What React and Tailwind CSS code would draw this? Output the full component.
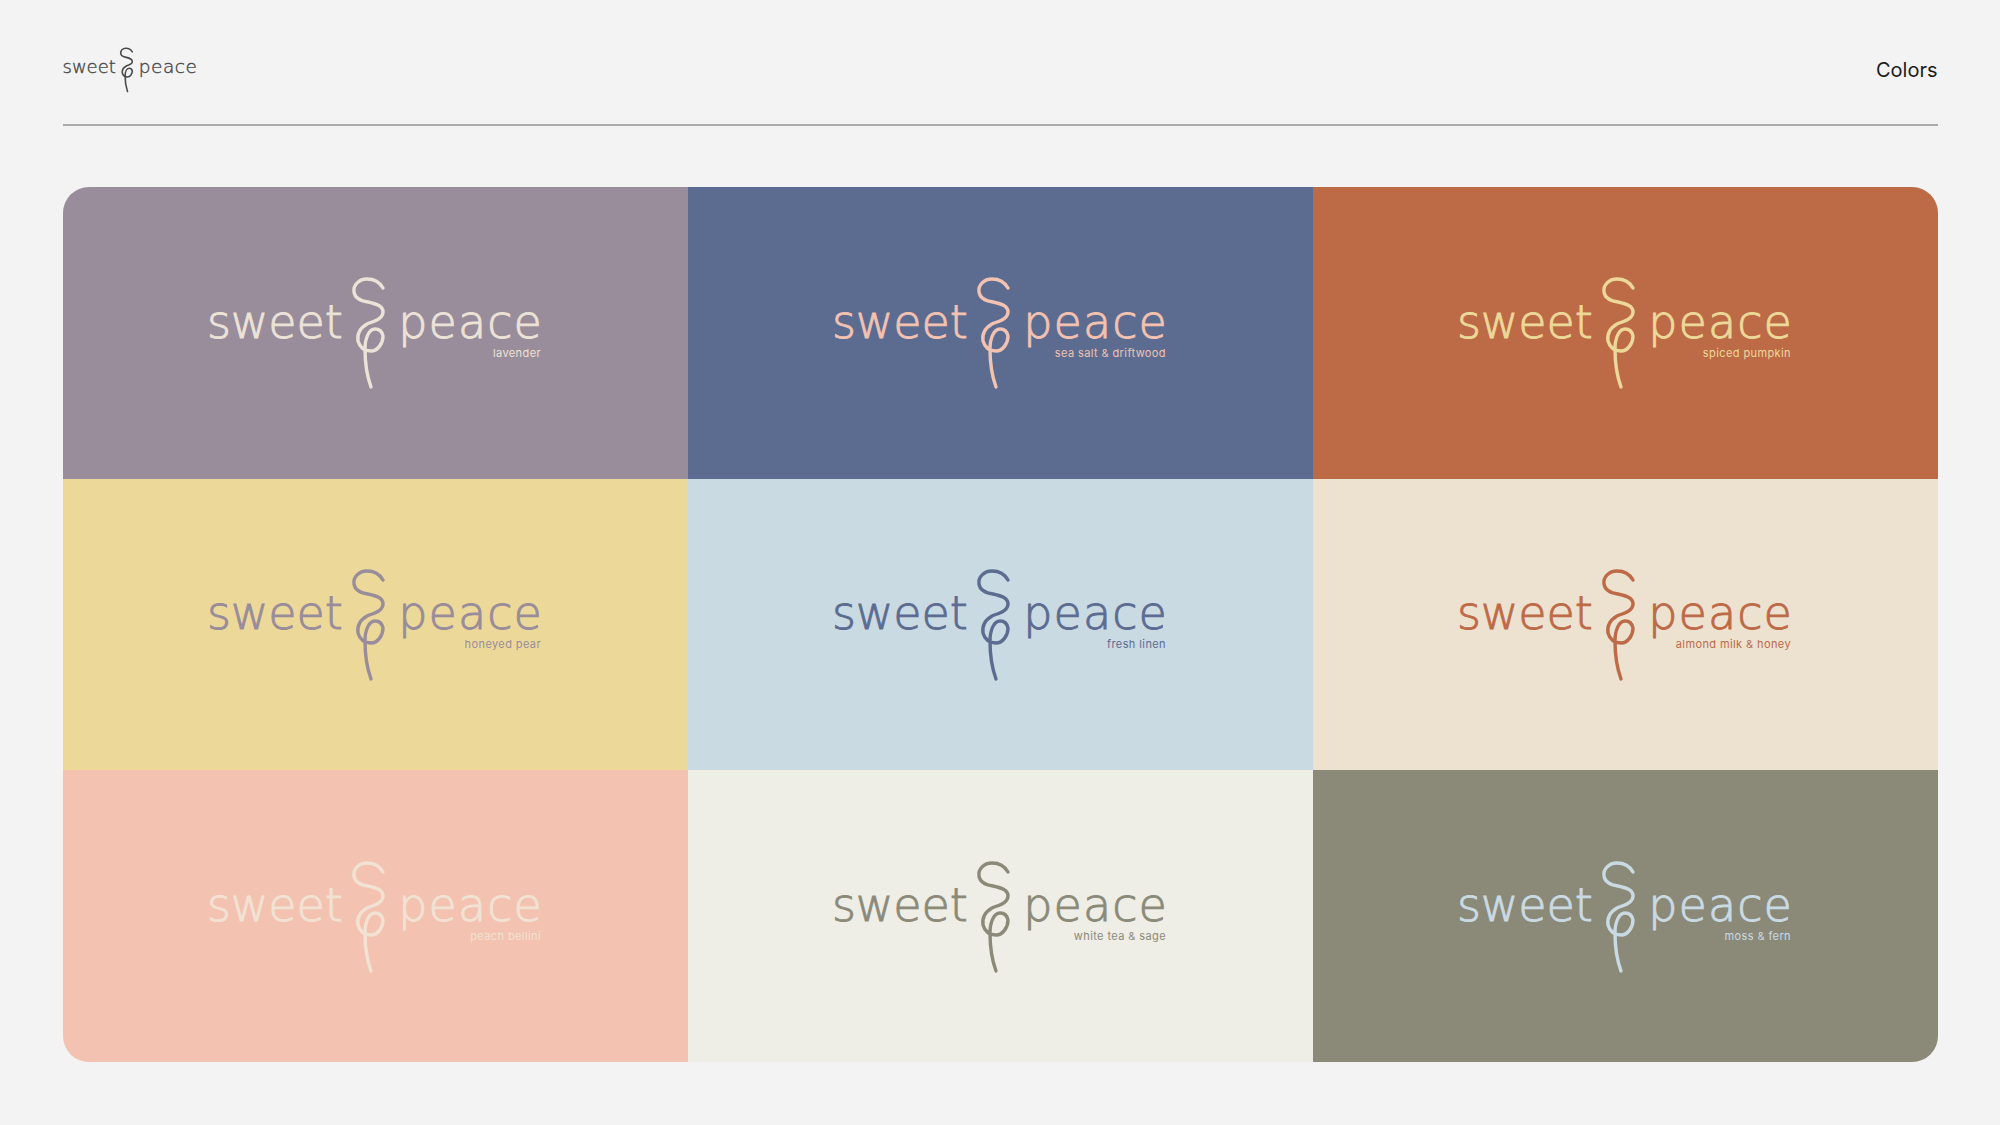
import React from 'react';

const SWATCHES = [
  { label: 'lavender', bg: 'bg-[#998c9b]', fg: 'text-[#ece3d7]' },
  { label: 'sea salt & driftwood', bg: 'bg-[#5c6c91]', fg: 'text-[#f3c2b0]' },
  { label: 'spiced pumpkin', bg: 'bg-[#bd6a47]', fg: 'text-[#ecd999]' },
  { label: 'honeyed pear', bg: 'bg-[#ecd999]', fg: 'text-[#998c9b]' },
  { label: 'fresh linen', bg: 'bg-[#cadae3]', fg: 'text-[#5c6c91]' },
  { label: 'almond milk & honey', bg: 'bg-[#ede1d0]', fg: 'text-[#bd6a47]' },
  { label: 'peach bellini', bg: 'bg-[#f3c2b0]', fg: 'text-[#f1e2d4]' },
  { label: 'white tea & sage', bg: 'bg-[#eeede6]', fg: 'text-[#8b8a79]' },
  { label: 'moss & fern', bg: 'bg-[#8b8a79]', fg: 'text-[#cadae3]' },
];

// curly stem between the two words
const Curl = ({ className, strokeWidth = 3.4 }) => (
  <svg viewBox="20 12 37 115" fill="none" className={className}>
    <path
      d="M53 24C49 17 44 15 37 15C29 15 23 21 24 28C25 35 31 37 38 38C47 40 53 42 53 48C53 55 44 57 37 60C30 64 27 70 28 77C30 84 35 87 41 87C48 87 53 79 53 72C52 67 49 65 45 65C39 65 35 74 35 85C35 100 37 112 41 123"
      stroke="currentColor"
      strokeWidth={strokeWidth}
      strokeLinecap="round"
    />
  </svg>
);

const Swatch = ({ label, bg, fg }) => (
  <div className={`flex items-center justify-center h-[291.67px] ${bg} ${fg}`}>
    <div className="flex items-start mt-[2px] font-['DejaVu_Sans',sans-serif] font-extralight">
      <span className="mt-[23.5px] text-[46px] leading-[44px] tracking-[-0.1px] [-webkit-text-stroke:0.9px_currentColor]">sweet</span>
      <Curl className="w-[37px] h-[115px] ml-[7.5px] mr-[11px]" />
      <div className="mt-[23.5px] flex flex-col items-end">
        <span className="text-[46px] leading-[44px] tracking-[1.1px] [-webkit-text-stroke:0.9px_currentColor]">peace</span>
        <span className="mt-[3px] mr-[2px] font-['Inter',sans-serif] text-[11px] leading-[12px] tracking-[0.4px] font-normal whitespace-nowrap">{label}</span>
      </div>
    </div>
  </div>
);

export default function App() {
  return (
    <div className="min-h-screen bg-[#f3f3f3] px-[62.5px] font-['Inter',sans-serif]">
      <header className="h-[126px] flex justify-between border-b-2 border-[#ababab]">
        <div className="flex items-start mt-[47px] text-[#4a4a4a] font-['DejaVu_Sans',sans-serif] font-extralight">
          <span className="mt-[11px] text-[18px] leading-[18px] [-webkit-text-stroke:0.4px_currentColor]">sweet</span>
          <Curl className="w-[15px] h-[46px] ml-[3px] mr-[5px]" strokeWidth={4} />
          <span className="mt-[11px] text-[18.5px] leading-[18px] tracking-[0.5px] [-webkit-text-stroke:0.4px_currentColor]">peace</span>
        </div>
        <div className="mt-[57px] text-[20px] leading-[26px] text-[#1c1c1c]">Colors</div>
      </header>
      <div className="mt-[61px] grid grid-cols-3 rounded-[26px] overflow-hidden">
        {SWATCHES.map((s) => (
          <Swatch key={s.label} {...s} />
        ))}
      </div>
    </div>
  );
}
